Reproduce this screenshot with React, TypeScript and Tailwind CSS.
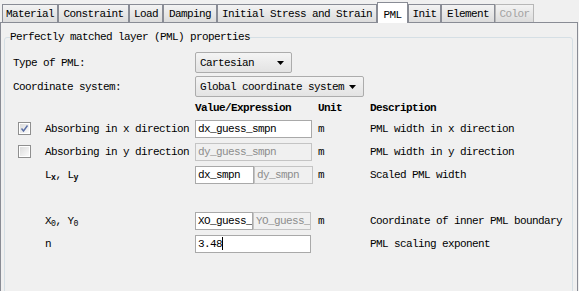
import React from "react";

const FONT = "font-['Liberation_Mono',monospace] text-[11px] tracking-[-0.6px] leading-[12px]";

const TABS = [
  { label: "Material", w: "w-[56px]" },
  { label: "Constraint", w: "w-[71px]" },
  { label: "Load", w: "w-[34px]" },
  { label: "Damping", w: "w-[54px]" },
  { label: "Initial Stress and Strain", w: "w-[160px]" },
  { label: "PML", w: "w-[31px]", active: true },
  { label: "Init", w: "w-[33px]" },
  { label: "Element", w: "w-[54px]" },
  { label: "Color", w: "w-[39px]", disabled: true },
];

function Tab({ label, w, active, disabled }: { label: string; w: string; active?: boolean; disabled?: boolean }) {
  if (active) {
    return (
      <div className={`${w} h-[21px] -mb-[1px] flex items-start justify-center pt-[6px] border border-b-0 border-[#898c95] bg-white`}>
        {label}
      </div>
    );
  }
  return (
    <div
      className={`${w} h-[18px] flex items-center justify-center pt-[1px] border border-b-0 bg-gradient-to-b from-[#f3f3f3] to-[#dcdcdc] ${
        disabled ? "border-[#b7b7b7] text-[#a3a3a3]" : "border-[#898c95]"
      }`}
    >
      {label}
    </div>
  );
}

function Dropdown({ value, w }: { value: string; w: string }) {
  return (
    <div className={`${w} h-[21px] flex items-center justify-between pl-[4px] pr-[7px] border border-[#acacac] rounded-[2px] bg-gradient-to-b from-[#f4f4f4] to-[#e3e3e3]`}>
      <span>{value}</span>
      <svg width="7" height="4" viewBox="0 0 7 4">
        <polygon points="0,0 7,0 3.5,4" fill="#000" />
      </svg>
    </div>
  );
}

function Checkbox({ checked }: { checked?: boolean }) {
  return (
    <div className="w-[13px] h-[13px] border border-[#8f8f8f] bg-white p-[1px]">
      <div className="w-full h-full bg-gradient-to-br from-[#dcdcdc] to-[#fbfbfb] flex items-center justify-center">
        {checked && (
          <svg width="9" height="9" viewBox="0 0 9 9">
            <path d="M1.5 4.5 L3.5 7 L7.5 1.5" stroke="#5a6fa6" strokeWidth="1.4" fill="none" />
          </svg>
        )}
      </div>
    </div>
  );
}

function Field({ value, w, disabled, cursor }: { value: string; w: string; disabled?: boolean; cursor?: boolean }) {
  return (
    <div
      className={`${w} h-[18px] flex items-center pl-[2px] border overflow-hidden whitespace-nowrap ${
        disabled ? "border-[#c4c4c4] bg-[#f0f0f0] text-[#8d8d8d]" : "border-[#a9a9a9] bg-white"
      }`}
    >
      {value}
      {cursor && <span className="w-[1px] h-[13px] bg-black" />}
    </div>
  );
}

function Row({
  check,
  label,
  value,
  unit,
  desc,
}: {
  check?: React.ReactNode;
  label?: React.ReactNode;
  value?: React.ReactNode;
  unit?: string;
  desc?: string;
}) {
  return (
    <div className="h-[23px] flex items-center">
      <div className="w-[40px] pl-[13px]">{check}</div>
      <div className="w-[150px]">{label}</div>
      <div className="w-[123px] flex">{value}</div>
      <div className="w-[52px]">{unit}</div>
      <div>{desc}</div>
    </div>
  );
}

export default function App() {
  return (
    <div className={`w-[579px] h-[291px] overflow-hidden bg-[#f0f0f0] text-black ${FONT}`}>
      <div className="flex items-end h-[22px] pl-[2px]">
        {TABS.map((t) => (
          <Tab key={t.label} {...t} />
        ))}
      </div>

      <div className="w-[578px] h-[290px] border border-[#898c95] bg-[#f0f0f0]">
        <fieldset className="mt-[8px] ml-[3px] mr-[4px] h-[280px] border border-[#d5dfe5] rounded-[3px]">
          <legend className="ml-[5px] leading-[12px]">Perfectly matched layer (PML) properties</legend>

          <div className="mt-[9px] flex items-center h-[21px]">
            <div className="w-[190px] pl-[8px]">Type of PML:</div>
            <Dropdown value="Cartesian" w="w-[97px]" />
          </div>
          <div className="mt-[3px] flex items-center h-[21px]">
            <div className="w-[190px] pl-[8px]">Coordinate system:</div>
            <Dropdown value="Global coordinate system" w="w-[169px]" />
          </div>

          <div className="mt-[1px] h-[19px] flex items-center font-bold">
            <div className="w-[190px]" />
            <div className="w-[123px]">Value/Expression</div>
            <div className="w-[52px]">Unit</div>
            <div>Description</div>
          </div>

          <Row
            check={<Checkbox checked />}
            label="Absorbing in x direction"
            value={<Field value="dx_guess_smpn" w="w-[117px]" />}
            unit="m"
            desc="PML width in x direction"
          />
          <Row
            check={<Checkbox />}
            label="Absorbing in y direction"
            value={<Field value="dy_guess_smpn" w="w-[117px]" disabled />}
            unit="m"
            desc="PML width in y direction"
          />
          <Row
            label={
              <span>
                L<sub className="font-bold">x</sub>, L<sub className="font-bold">y</sub>
              </span>
            }
            value={
              <>
                <Field value="dx_smpn" w="w-[59px]" />
                <Field value="dy_smpn" w="w-[59px]" disabled />
              </>
            }
            unit="m"
            desc="Scaled PML width"
          />
          <div className="h-[23px]" />
          <Row
            label={
              <span>
                X<sub>0</sub>, Y<sub>0</sub>
              </span>
            }
            value={
              <>
                <Field value="XO_guess_" w="w-[58px]" />
                <Field value="YO_guess_" w="w-[58px]" disabled />
              </>
            }
            unit="m"
            desc="Coordinate of inner PML boundary"
          />
          <Row label="n" value={<Field value="3.48" w="w-[116px]" cursor />} desc="PML scaling exponent" />
        </fieldset>
      </div>
    </div>
  );
}
